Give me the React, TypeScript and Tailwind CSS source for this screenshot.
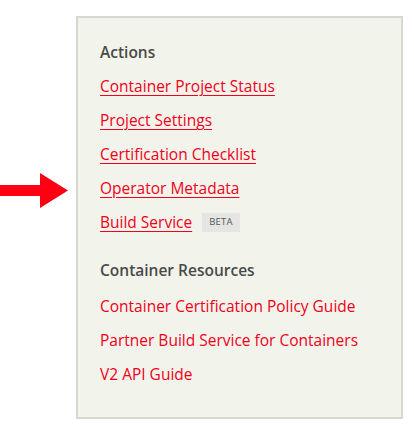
import React from "react";

const actions = [
  { label: "Container Project Status" },
  { label: "Project Settings" },
  { label: "Certification Checklist" },
  { label: "Operator Metadata" },
  { label: "Build Service", beta: true },
];

const resources = [
  "Container Certification Policy Guide",
  "Partner Build Service for Containers",
  "V2 API Guide",
];

export default function App() {
  return (
    <div
      className="relative w-[414px] h-[427px] bg-white pt-[16px] pl-[76px]"
      style={{ fontFamily: '"Open Sans", "Liberation Sans", sans-serif' }}
    >
      {/* annotation arrow */}
      <svg className="absolute left-0 top-[173px]" width="69" height="35" viewBox="0 0 69 35">
        <path d="M0 12 H40 V0 L68 17.5 L40 35 V23 H0 Z" fill="#ff0013" />
      </svg>

      <div className="w-[327px] h-[403px] border-2 border-[#d6d9d1] bg-[#f2f4ec] pl-[22px] pt-[24px]">
        <h3 className="text-[15.5px] font-semibold text-[#4a4a4a] leading-[20px]">Actions</h3>

        <ul className="mt-[14px] flex flex-col gap-[14px]">
          {actions.map((a) => (
            <li key={a.label} className="flex items-center h-[20px]">
              <a href="#" className="text-[15.5px] text-[#f0001a] underline underline-offset-[3px] leading-[20px]">
                {a.label}
              </a>
              {a.beta && (
                <span className="ml-[10px] bg-[#e5e5e3] text-[#555] text-[9.5px] px-[7px] h-[19px] flex items-center tracking-wide">
                  BETA
                </span>
              )}
            </li>
          ))}
        </ul>

        <h3 className="mt-[28px] text-[15.5px] font-semibold text-[#4a4a4a] leading-[20px]">
          Container Resources
        </h3>

        <ul className="mt-[14px] flex flex-col gap-[14px]">
          {resources.map((r) => (
            <li key={r} className="h-[20px]">
              <a href="#" className="text-[15.5px] text-[#f0001a] leading-[20px]">
                {r}
              </a>
            </li>
          ))}
        </ul>
      </div>
    </div>
  );
}
